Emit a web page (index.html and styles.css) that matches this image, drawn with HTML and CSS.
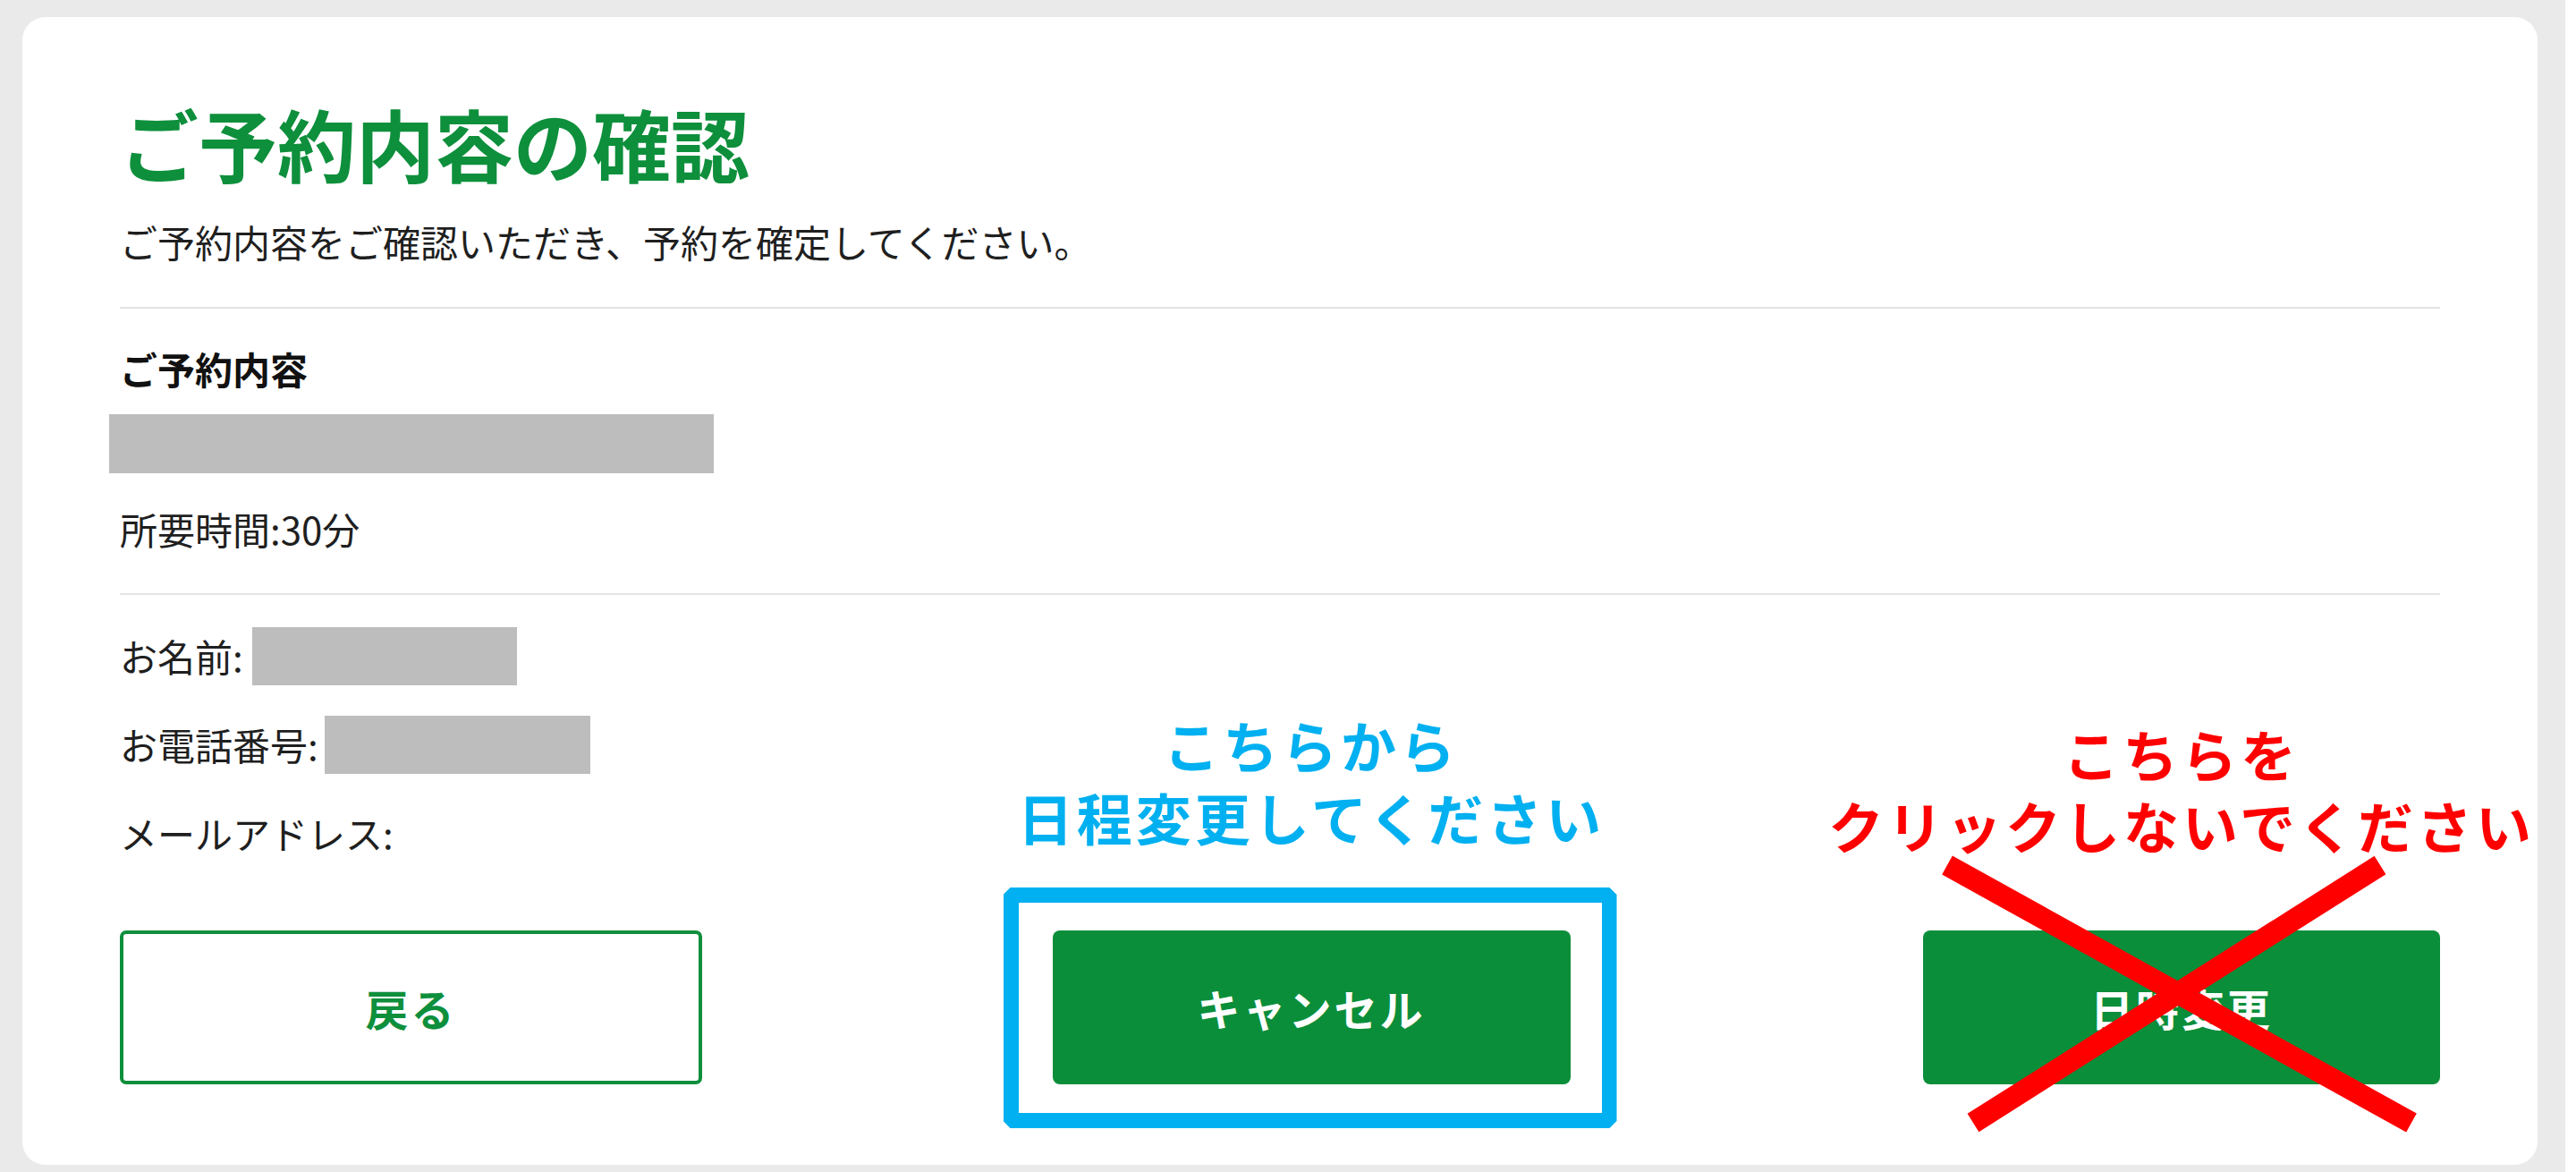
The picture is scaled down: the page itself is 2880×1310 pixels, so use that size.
FILE: index.html
```html
<!DOCTYPE html>
<html lang="ja">
<head>
<meta charset="utf-8">
<title>ご予約内容の確認</title>
<link rel="stylesheet" href="styles.css">
</head>
<body>
<main class="card">
  <h1 class="title">ご予約内容の確認</h1>
  <p class="lead">ご予約内容をご確認いただき、予約を確定してください。</p>
  <hr class="divider">
  <section class="menu">
    <h2 class="menu-label">ご予約内容</h2>
    <div class="redact redact-menu"></div>
    <p class="duration">所要時間:30分</p>
  </section>
  <hr class="divider divider-second">
  <section class="info">
    <div class="info-row">お名前:<span class="redact redact-name"></span></div>
    <div class="info-row">お電話番号:<span class="redact redact-tel"></span></div>
    <div class="info-row">メールアドレス:</div>
  </section>
  <div class="actions">
    <div class="action action-back">
      <button class="btn btn-outline" type="button">戻る</button>
    </div>
    <div class="action action-cancel">
      <p class="note note-blue">こちらから<br>日程変更してください</p>
      <span class="highlight"></span>
      <button class="btn btn-fill" type="button">キャンセル</button>
    </div>
    <div class="action action-change">
      <p class="note note-red">こちらを<br>クリックしないでください</p>
      <button class="btn btn-fill" type="button">日時変更</button>
      <svg class="cross" viewBox="0 0 570 315" width="570" height="315" aria-hidden="true">
        <line x1="18" y1="12" x2="537" y2="300" stroke="#ff0000" stroke-width="24"/>
        <line x1="502" y1="12" x2="47" y2="300" stroke="#ff0000" stroke-width="24"/>
      </svg>
    </div>
  </div>
</main>
</body>
</html>
```

FILE: styles.css
```css
html {
  background: #ffffff;
}

body {
  margin: 0;
  min-height: 1310px;
  background: linear-gradient(to right, #e9eae9 2868px, #ffffff 2868px);
  font-family: "Noto Sans CJK JP", "Noto Sans", sans-serif;
  color: #1f1f1f;
  overflow: hidden;
}

.card {
  box-sizing: border-box;
  width: 2812px;
  margin: 19px 0 0 25px;
  padding: 87px 109px 90px 109px;
  background: #ffffff;
  border-radius: 26px;
}

.title {
  margin: 0;
  font-size: 88px;
  line-height: 106px;
  font-weight: 700;
  color: #0e8f3c;
}

.lead {
  margin: 28px 0 0;
  font-size: 42px;
  line-height: 60px;
  font-weight: 400;
}

.divider {
  margin: 43px 0 0;
  border: 0;
  border-top: 2px solid #e3e4e3;
  height: 0;
}

.divider-second {
  margin-top: 42px;
}

.menu-label {
  margin: 37px 0 0;
  font-size: 42px;
  line-height: 60px;
  font-weight: 700;
  color: #111111;
}

.redact {
  display: inline-block;
  background: #bdbdbd;
}

.redact-menu {
  display: block;
  width: 676px;
  height: 66px;
  margin: 21px 0 0 -12px;
}

.duration {
  margin: 32px 0 0;
  font-size: 42px;
  line-height: 60px;
}

.info {
  margin-top: 35px;
  display: flex;
  flex-direction: column;
  gap: 33px;
}

.info-row {
  display: flex;
  align-items: center;
  height: 66px;
  font-size: 42px;
  line-height: 60px;
}

.redact-name {
  width: 296px;
  height: 65px;
  margin-left: 10px;
}

.redact-tel {
  width: 297px;
  height: 65px;
  margin-left: 7px;
}

.actions {
  margin-top: 76px;
  display: flex;
  justify-content: space-between;
  align-items: flex-start;
}

.action {
  position: relative;
  height: 172px;
}

.action-back {
  width: 651px;
}

.action-cancel {
  width: 579px;
  margin-left: -3px;
}

.action-change {
  width: 578px;
}

.btn {
  box-sizing: border-box;
  width: 100%;
  height: 100%;
  font-family: "Noto Sans CJK JP", "Noto Sans", sans-serif;
  font-size: 48px;
  font-weight: 700;
  letter-spacing: 3px;
  cursor: pointer;
  position: relative;
  z-index: 1;
}

.btn-outline {
  background: #ffffff;
  color: #0e8f3c;
  border: 4px solid #0e8f3c;
  border-radius: 7px;
}

.btn-fill {
  background: #0b8e3a;
  color: #ffffff;
  border: 0;
  border-radius: 8px;
}

.note {
  position: absolute;
  left: 50%;
  bottom: 258px;
  margin: 0;
  transform: translateX(-50%);
  white-space: nowrap;
  text-align: center;
  font-size: 62px;
  font-weight: 700;
  letter-spacing: 4px;
}

.note-blue {
  color: #00b0f0;
  line-height: 81px;
}

.note-red {
  color: #ff0000;
  line-height: 80px;
  bottom: 250px;
}

.highlight {
  position: absolute;
  left: -55px;
  right: -52px;
  top: -48px;
  bottom: -49px;
  border: 17px solid #00b0f0;
  clip-path: polygon(8px 0, calc(100% - 8px) 0, 100% 8px, 100% calc(100% - 8px), calc(100% - 8px) 100%, 8px 100%, 0 calc(100% - 8px), 0 8px);
}

.cross {
  position: absolute;
  left: 9px;
  top: -85px;
  z-index: 2;
  display: block;
}
```
